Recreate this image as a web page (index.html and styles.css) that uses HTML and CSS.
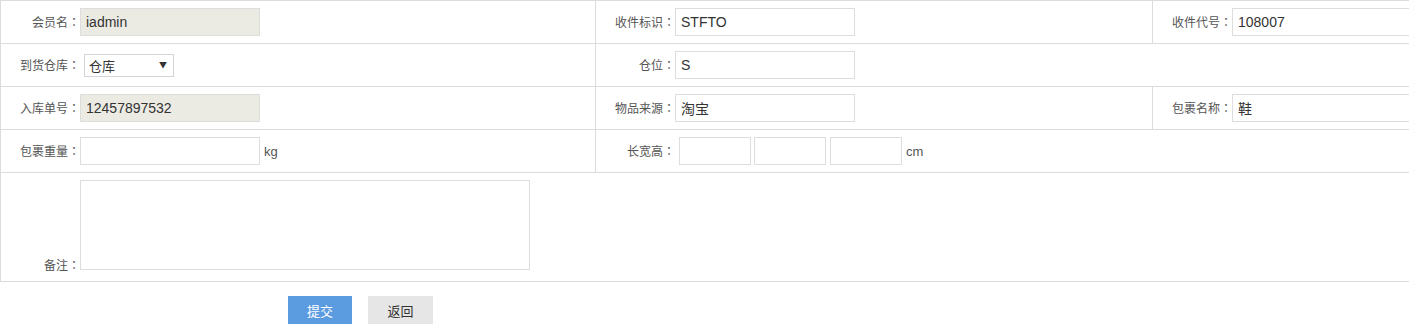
FILE: index.html
```html
<!DOCTYPE html>
<html>
<head>
<meta charset="utf-8">
<title>入库单</title>
<link rel="stylesheet" href="styles.css">
</head>
<body>
<div class="page">
  <div class="form">
    <div class="cell c1"><label class="lbl">会员名<span class="colon">：</span></label><input class="ipt ro" type="text" value="iadmin" readonly></div>
    <div class="cell c2"><label class="lbl">收件标识<span class="colon">：</span></label><input class="ipt" type="text" value="STFTO"></div>
    <div class="cell c3"><label class="lbl">收件代号<span class="colon">：</span></label><input class="ipt" type="text" value="108007"></div>

    <div class="cell c1"><label class="lbl">到货仓库<span class="colon">：</span></label><span class="sel-wrap"><select class="sel"><option>仓库</option></select><span class="sel-arrow">▼</span></span></div>
    <div class="cell span2"><label class="lbl">仓位<span class="colon">：</span></label><input class="ipt" type="text" value="S"></div>

    <div class="cell c1"><label class="lbl">入库单号<span class="colon">：</span></label><input class="ipt ro" type="text" value="12457897532" readonly></div>
    <div class="cell c2"><label class="lbl">物品来源<span class="colon">：</span></label><input class="ipt" type="text" value="淘宝"></div>
    <div class="cell c3"><label class="lbl">包裹名称<span class="colon">：</span></label><input class="ipt" type="text" value="鞋"></div>

    <div class="cell c1"><label class="lbl">包裹重量<span class="colon">：</span></label><input class="ipt" type="text" value=""><span class="unit">kg</span></div>
    <div class="cell span2"><label class="lbl">长宽高<span class="colon">：</span></label><span class="dims"><input class="ipt small" type="text"><input class="ipt small" type="text"><input class="ipt small" type="text"></span><span class="unit">cm</span></div>

    <div class="cell span3 tall"><label class="lbl lbl-bottom">备注<span class="colon">：</span></label><textarea class="memo"></textarea></div>
  </div>
  <div class="actions">
    <button class="btn btn-primary" type="button">提交</button>
    <button class="btn btn-default" type="button">返回</button>
  </div>
</div>
</body>
</html>
```

FILE: styles.css
```css
html, body {
  margin: 0;
  padding: 0;
  overflow: hidden;
  background: #fff;
}

.page {
  width: 1409px;
  height: 324px;
  overflow: hidden;
  font-family: "Noto Sans CJK SC", "Liberation Sans", sans-serif;
  font-size: 12px;
  color: #555;
}

.form {
  display: grid;
  grid-template-columns: 595px 557px 288px;
  grid-template-rows: 43px 43px 43px 43px 109px;
  width: 1441px;
  border-top: 1px solid #dcdcdc;
  border-left: 1px solid #dcdcdc;
}

.cell {
  display: flex;
  align-items: center;
  border-right: 1px solid #dcdcdc;
  border-bottom: 1px solid #dcdcdc;
  box-sizing: border-box;
  min-width: 0;
}

.span2 { grid-column: span 2; }
.span3 { grid-column: span 3; }

.tall {
  align-items: flex-start;
  padding: 7px 0 11px;
}

.lbl {
  flex: 0 0 79px;
  width: 79px;
  text-align: right;
  line-height: 16px;
  color: #555;
  white-space: nowrap;
  text-spacing-trim: space-all;
}

.colon {
  display: inline-block;
  width: 12px;
  text-align: center;
  font-family: "Noto Sans CJK TC", "Noto Sans CJK JP", sans-serif;
  text-spacing-trim: space-all;
}

.lbl-bottom {
  align-self: flex-end;
  margin-bottom: -3px;
}

.ipt {
  box-sizing: border-box;
  width: 180px;
  height: 28px;
  margin: 0;
  padding: 0 5px;
  border: 1px solid #dddddd;
  background: #fff;
  font-family: "Liberation Sans", "Noto Sans CJK SC", sans-serif;
  font-size: 14px;
  color: #333;
  outline: none;
  flex: 0 0 auto;
}

.ipt.ro {
  background: #ebebe4;
}

.ipt.small {
  width: 72px;
}

.dims {
  display: flex;
  gap: 3px;
  margin-left: 4px;
}

.dims .ipt:last-child {
  margin-left: 1px;
}

.unit {
  margin-left: 4px;
  font-family: "Liberation Sans", sans-serif;
  font-size: 13px;
  color: #555;
}

.sel-wrap {
  position: relative;
  display: inline-block;
  margin-left: 4px;
  height: 23px;
}

.sel {
  -webkit-appearance: none;
  appearance: none;
  box-sizing: border-box;
  width: 90px;
  height: 23px;
  margin: 0;
  padding: 0 4px;
  border: 1px solid #d5d5d5;
  border-radius: 0;
  background: #fff;
  font-family: "Noto Sans CJK SC", sans-serif;
  font-size: 13px;
  color: #333;
  outline: none;
}

.sel-arrow {
  position: absolute;
  right: 7px;
  top: 5px;
  font-size: 8px;
  line-height: 12px;
  color: #333;
  pointer-events: none;
}

.memo {
  box-sizing: border-box;
  width: 450px;
  height: 90px;
  margin: 0;
  padding: 4px;
  border: 1px solid #dddddd;
  resize: none;
  outline: none;
  font-family: "Liberation Sans", "Noto Sans CJK SC", sans-serif;
  font-size: 13px;
}

.actions {
  display: flex;
  gap: 16px;
  padding-left: 288px;
  margin-top: 14px;
}

.btn {
  box-sizing: border-box;
  width: 64px;
  height: 28px;
  margin: 0;
  padding: 0;
  border: none;
  font-family: "Noto Sans CJK SC", sans-serif;
  font-size: 13px;
  cursor: pointer;
}

.btn-primary {
  background: #5b9be0;
  color: #fff;
}

.btn-default {
  background: #e6e6e6;
  color: #333;
  width: 65px;
}
```
